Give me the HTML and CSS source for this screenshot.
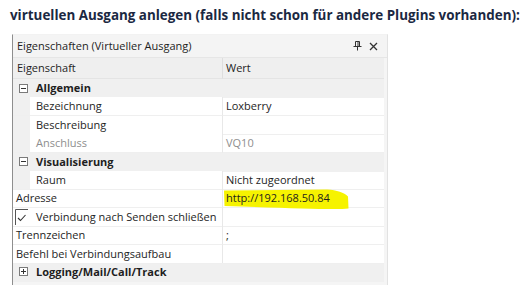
FILE: index.html
```html
<!DOCTYPE html>
<html>
<head>
<meta charset="utf-8">
<link rel="stylesheet" href="styles.css">
</head>
<body>
<div class="heading">virtuellen Ausgang anlegen (falls nicht schon für andere Plugins vorhanden):</div>
<div class="panel">
  <div class="titlebar">
    <span class="title">Eigenschaften (Virtueller Ausgang)</span>
    <span class="tools">
      <svg class="pin" width="9" height="10" viewBox="0 0 9 10"><path d="M2.5 0.5h4v5h-4z M0.5 5.5h8 M4.5 5.5v4" fill="none" stroke="#333" stroke-width="1"/><path d="M5 1v4" stroke="#333" stroke-width="1"/></svg>
      <svg class="close" width="9" height="9" viewBox="0 0 9 9"><path d="M1 1L8 8M8 1L1 8" stroke="#333" stroke-width="1.3"/></svg>
    </span>
  </div>
  <div class="grid">
    <div class="row head"><div class="name">Eigenschaft</div><div class="val">Wert</div></div>
    <div class="row cat"><div class="name"><span class="box minus"></span>Allgemein</div><div class="val"></div></div>
    <div class="row child"><div class="name">Bezeichnung</div><div class="val">Loxberry</div></div>
    <div class="row child"><div class="name">Beschreibung</div><div class="val"></div></div>
    <div class="row child muted"><div class="name">Anschluss</div><div class="val">VQ10</div></div>
    <div class="row cat"><div class="name"><span class="box minus"></span>Visualisierung</div><div class="val"></div></div>
    <div class="row child"><div class="name">Raum</div><div class="val">Nicht zugeordnet</div></div>
    <div class="row plain"><div class="name">Adresse</div><div class="val hl"><svg class="marker" width="132" height="24" viewBox="0 0 132 24"><path d="M1 1.5 L104 0.5 C114 1 121 3.5 125 7.5 L125.5 19.5 C112 21 70 19 1.5 17 Z" fill="#f6f300"/></svg><span class="txt">http://192.168.50.84</span></div></div>
    <div class="row plain check"><div class="name"><svg class="cb" width="14" height="16" viewBox="0 0 14 16"><path d="M0.5 16V0.5H13" fill="none" stroke="#555" stroke-width="1"/><path d="M3 9l2.5 2.5L10.5 6" fill="none" stroke="#333" stroke-width="1.1"/></svg>Verbindung nach Senden schließen</div><div class="val"></div></div>
    <div class="row plain"><div class="name">Trennzeichen</div><div class="val">;</div></div>
    <div class="row plain"><div class="name">Befehl bei Verbindungsaufbau</div><div class="val"></div></div>
    <div class="row cat last"><div class="name"><span class="box plus"></span>Logging/Mail/Call/Track</div><div class="val"></div></div>
  </div>
</div>
</body>
</html>
```
FILE: styles.css
```css
html, body {
  margin: 0;
  padding: 0;
  background: #ffffff;
}
body {
  font-family: "Open Sans", "Noto Sans", sans-serif;
  width: 529px;
  height: 308px;
  overflow: hidden;
}
.heading {
  height: 34px;
  box-sizing: border-box;
  padding: 5px 0 0 10px;
  font-weight: bold;
  font-size: 13.4px;
  line-height: 20px;
  color: #1b2842;
  white-space: nowrap;
}
.panel {
  margin-left: 12px;
  width: 376px;
  height: 251px;
  box-sizing: border-box;
  border-left: 1px solid #8e8e8e;
  border-right: 1px solid #e2e2e2;
  border-top: 1px solid #f2f2f2;
  background: #f5f5f5;
  font-size: 11px;
  color: #1e1e1e;
}
.titlebar {
  height: 22px;
  display: flex;
  align-items: center;
  justify-content: space-between;
  padding: 0 8px 0 4px;
  background: #f4f4f4;
  border-bottom: 1px solid #e6e6e6;
}
.title {
  line-height: 20px;
}
.tools {
  display: flex;
  align-items: center;
  gap: 7px;
  padding-right: 1px;
}
.grid {
  width: 371px;
  background: #ffffff;
}
.row {
  display: grid;
  grid-template-columns: 209px 1fr;
  height: 18.4px;
  line-height: 18px;
  box-sizing: border-box;
}
.row > div {
  border-bottom: 1px solid #efefef;
  white-space: nowrap;
  overflow: visible;
}
.row .val {
  border-left: 1px solid #e8e8e8;
  padding-left: 3px;
}
.head {
  height: 21px;
  line-height: 20px;
  background: #efefef;
}
.head > div { border-bottom: 1px solid #e4e4e4; }
.head .name { padding-left: 4px; }
.head .val { border-left: 1px solid #dedede; }
.cat {
  background: #f0f0f0;
  font-weight: bold;
}
.cat > div { border-bottom: 1px solid #f0f0f0; }
.cat .val { border-left: 1px solid #f0f0f0; }
.cat .name {
  display: flex;
  align-items: center;
  padding-left: 6px;
}
.box {
  width: 7px;
  height: 7px;
  border: 1px solid #7a7a7a;
  margin-right: 8px;
  position: relative;
  flex: none;
  background: #fff;
}
.box::before {
  content: "";
  position: absolute;
  left: 1px;
  top: 3px;
  width: 5px;
  height: 1px;
  background: #333;
}
.box.plus::after {
  content: "";
  position: absolute;
  left: 3px;
  top: 1px;
  width: 1px;
  height: 5px;
  background: #333;
}
.child .name {
  padding-left: 23px;
  background: linear-gradient(to right, #f0f0f0 0, #f0f0f0 17px, #ffffff 17px);
}
.muted { color: #8e8e8e; }
.plain .name { padding-left: 3px; }
.check .name {
  display: flex;
  align-items: center;
  padding-left: 2px;
}
.cb {
  margin-right: 7px;
  flex: none;
}
.hl {
  position: relative;
}
.marker {
  position: absolute;
  left: 0;
  top: 0;
  overflow: visible;
}
.txt {
  position: relative;
}
.last { height: 19px; }
```
